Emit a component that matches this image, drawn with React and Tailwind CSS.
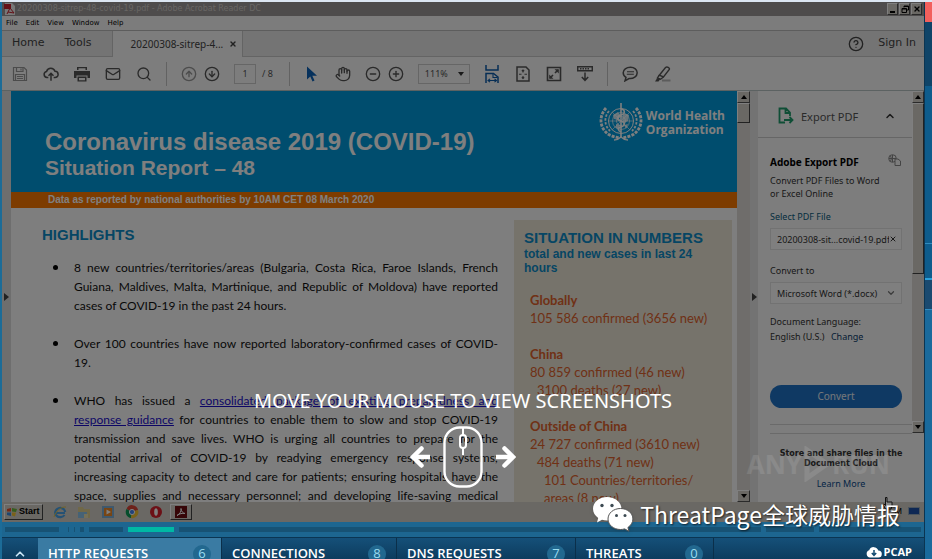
import React from "react";
import {
  Mail, Search, CircleArrowUp, CircleArrowDown, Hand, CircleMinus, CirclePlus,
  CircleHelp, ChevronUp, ChevronDown, X,
} from "lucide-react";

const SaveIcon = () => (
  <svg viewBox="0 0 16 16" className="size-4 text-[#999]" fill="none" stroke="currentColor" strokeWidth="1.2">
    <path d="M1.5 1.5h10.500l2.500 2.500v10.500h-13z" />
    <path d="M4.500 1.500v4h6.500v-4M3.500 14.500v-6h9v6M5 10.500h6M5 12.500h6M9 2.500v2" />
  </svg>
);

const CloudUp = () => (
  <svg viewBox="0 0 18 16" className="size-4" fill="none" stroke="currentColor" strokeWidth="1.7">
    <path d="M6 12H4.500a3.500 3.500 0 0 1-.5-6.900A5 5 0 0 1 13.500 5a3.500 3.500 0 0 1 0 7H12" />
    <path d="M9 15.500V7.500M6.200 10L9 7.200 11.800 10" />
  </svg>
);

const PrintIcon = () => (
  <svg viewBox="0 0 16 16" className="size-4" fill="currentColor">
    <path d="M3 1h10v3H3zM4.500 2.300v1.700h7V2.300z" fillRule="evenodd" />
    <path d="M0 5h16v7h-2.500V9.500h-11V12H0z" />
    <path d="M3.500 10.500h9V15.500h-9zM5 12v2.200h6V12z" fillRule="evenodd" />
  </svg>
);

const CursorIcon = () => (
  <svg viewBox="0 0 12 16" className="h-4 w-3 text-[#0d62b8]" fill="currentColor">
    <path d="M1 0.500v13l3.300-3 2.200 5 2-.9-2.200-4.900h4.700z" />
  </svg>
);

const FitWidth = () => (
  <svg viewBox="0 0 16 18" className="h-[18px] w-4 text-[#0d5cab]" fill="none" stroke="currentColor" strokeWidth="1.500">
    <path d="M2 0v5h12V0M2 18V8.500h7.500L14 12v6" />
    <path d="M9 8.500v4h4.500M4 15.500h8M6 13.800l-2 1.700 2 1.700M10.500 13.800l2 1.700-2 1.700" strokeWidth="1.100" />
  </svg>
);

const FitPage = () => (
  <svg viewBox="0 0 16 16" className="size-4" fill="none" stroke="currentColor" strokeWidth="1.500">
    <path d="M2 1h9l3 3v11H2z" />
    <path d="M8 4v2.500M8 10v2.500M4 8.200h2.500M9.500 8.200H12M6.800 5.200L8 4l1.200 1.200M6.800 11.300L8 12.500l1.200-1.200" strokeWidth="1.100" />
  </svg>
);

const FullScreen = () => (
  <svg viewBox="0 0 16 16" className="size-4" fill="none" stroke="currentColor" strokeWidth="1.600">
    <path d="M1.500 1.500h13v13h-13z" />
    <path d="M9 7l3-3M4 12l3-3" />
    <path d="M8.500 3.200h4.300v4.300zM3.200 8.500v4.300h4.300z" fill="currentColor" stroke="none" />
  </svg>
);

const ReadMode = () => (
  <svg viewBox="0 0 16 17" className="h-[17px] w-4" fill="none" stroke="currentColor" strokeWidth="1.500">
    <path d="M.7 1.700h14.600v4H.7z" />
    <path d="M3 3.700h10" strokeDasharray="1.500 1" />
    <path d="M8 7.500v7.500M4.800 12L8 15.300 11.200 12" />
  </svg>
);

const CommentIcon = () => (
  <svg viewBox="0 0 16 16" className="size-4" fill="none" stroke="currentColor" strokeWidth="1.500">
    <path d="M8.500 1.200c-4.200 0-7.300 2.500-7.300 5.600 0 1.900 1 3.500 2.800 4.600L3 14.800l4-2.300c4.500.5 8.200-2.200 8.200-5.700 0-3.100-2.800-5.600-6.700-5.600z" />
    <path d="M5 5.800h7M4.800 8.300h7" strokeWidth="1.100" />
  </svg>
);

const HighlightIcon = () => (
  <svg viewBox="0 0 17 16" className="h-4 w-[17px]" fill="none" stroke="currentColor" strokeWidth="1.400">
    <path d="M8 14.500h8.500" stroke="#b8b8b8" strokeWidth="2" />
    <path d="M11.500 1.500c1.500-1.200 4.500 0 3.800 2L9.500 11l-4.200-1.800z" />
    <path d="M5.300 9.200L3.500 12l3 1.200 3-2.200" />
    <path d="M3.200 12l3 1.300L4.500 15.500H1z" fill="currentColor" stroke="none" />
  </svg>
);

const ExportIcon = () => (
  <svg viewBox="0 0 16 18" className="h-[18px] w-4 text-[#1f9d6c]" fill="none" stroke="currentColor" strokeWidth="1.800">
    <path d="M7 15.500H1.500v-14h6.500l4 4V9M7.500 1.500V6H12M6 13h8M11.500 10l3 3-3 3" />
  </svg>
);

const GlobeCopy = () => (
  <svg viewBox="0 0 14 12" className="h-3 w-3.5 text-[#888]" fill="none" stroke="currentColor">
    <circle cx="4.500" cy="4.500" r="3.800" />
    <path d="M4.500 1v7M1 4.500h7M2.500 2c1 2 1 3.500 0 5" />
    <path d="M7 5h3l2.500 2v4.500H7z" fill="#fafafa" />
  </svg>
);

const WhoEmblem = () => (
  <svg viewBox="0 0 44 38" className="h-[38px] w-11" fill="none" stroke="#fff">
    <circle cx="22" cy="18" r="12.500" strokeWidth="1" />
    <circle cx="22" cy="18" r="8.500" strokeWidth=".7" />
    <circle cx="22" cy="18" r="4.500" strokeWidth=".7" />
    <path d="M9.500 18h25M13 9l18 18M31 9L13 27" strokeWidth=".6" />
    <path d="M14 12l5-3 3 4-3 4-4-1zM24 10l6 2-1 6-4 2-2-4zM17 21l4 1-1 5-3-2zM25 22l4-1-2 5z" fill="#fff" stroke="none" opacity=".8" />
    <path d="M22 0v34" strokeWidth="1.600" />
    <path d="M22 6c5 1 4 5 0 6s-5 5 0 6 4 5 0 6-3 4 0 5" strokeWidth="1.500" />
    <path d="M7 5C0 13 0 24 9 31c3 2 7 3 11 4M37 5c7 8 7 19-2 26-3 2-7 3-11 4" strokeWidth="2.800" strokeDasharray="3 1.200" />
    <path d="M10 8C5 14 5 22 11 28M34 8c5 6 5 14-1 20" strokeWidth="1.800" strokeDasharray="2.500 1.500" />
    <path d="M15 37c3 0 5-1 7-3 2 2 4 3 7 3" strokeWidth="1.300" />
  </svg>
);

const WeChat = () => (
  <svg viewBox="0 0 42 36" className="h-9 w-[42px] drop-shadow">
    <path d="M15 1C7 1 1 6.200 1 12.800c0 3.700 2 7 5.200 9.200L5 26.500l5-2.700c1.600.5 3.300.7 5 .7 8 0 14.500-5.200 14.500-11.700S23 1 15 1z" fill="#fff" />
    <path d="M28.500 12.500c-7 0-12.500 4.600-12.500 10.500S21.500 33.500 28.500 33.500c1.400 0 2.800-.2 4.100-.6l4.400 2.300-1.100-3.700c3-2 5-5.100 5-8.500 0-5.900-5.500-10.500-12.400-10.500z" fill="#fff" stroke="#555" strokeWidth="1" />
    <g fill="#3d4a52">
      <circle cx="10" cy="9.500" r="1.700" /><circle cx="20" cy="9.500" r="1.700" />
      <circle cx="24.500" cy="19.500" r="1.500" /><circle cx="33" cy="19.500" r="1.500" />
    </g>
  </svg>
);

const Arrow = ({ left }) => (
  <svg viewBox="0 0 20 22" className={left ? "h-[22px] w-5 rotate-180" : "h-[22px] w-5"} fill="none" stroke="#fff" strokeWidth="4.500">
    <path d="M0 11h16" />
    <path d="M8.500 2.500L17 11l-8.500 8.500" strokeLinecap="round" />
  </svg>
);

const MouseIcon = () => (
  <svg viewBox="0 0 40 62" className="h-[62px] w-10" fill="none" stroke="#fff" strokeWidth="2.400">
    <rect x="1.500" y="1.500" width="37" height="59" rx="15" />
    <rect x="17" y="9" width="6" height="13" rx="3" strokeWidth="2" />
    <path d="M20 1v8M20 22v7" strokeWidth="2" />
  </svg>
);

const TaskIcons = () => (
  <>
    <svg viewBox="0 0 14 14" className="size-3.5" fill="none" stroke="#4aa3e8" strokeWidth="2.200">
      <path d="M12 8H3.500M11.500 10a5 4.600 0 1 1 .7-3" /><path d="M1 12C3 6 8 1.500 13 2" stroke="#e8c64a" strokeWidth="1" />
    </svg>
    <svg viewBox="0 0 14 14" className="size-3.5">
      <path d="M1 2h5l1 2h6v9H1z" fill="#e0d090" /><path d="M1 7h9v6H1z" fill="#8cc4ea" /><path d="M7 9h4v4H7z" fill="#e8e0b0" />
    </svg>
    <svg viewBox="0 0 14 14" className="size-3.5">
      <path d="M1 1h12v12H1z" fill="#7fb0d8" /><path d="M3 3h8v8H3z" fill="#f08a28" /><path d="M5.500 4.500v5L10 7z" fill="#fff" />
    </svg>
    <svg viewBox="0 0 14 14" className="size-3.5">
      <path d="M7 7L1.500 4A6 6 0 0 1 13 5z" fill="#db4437" /><path d="M7 7l-5.500-3A6 6 0 0 0 6 13z" fill="#0f9d58" />
      <path d="M7 7l6-2a6 6 0 0 1-7 8z" fill="#f4c430" /><circle cx="7" cy="7" r="2.600" fill="#4285f4" stroke="#fff" />
    </svg>
    <svg viewBox="0 0 14 14" className="size-3.5">
      <circle cx="7" cy="7" r="6" fill="#d8202c" /><ellipse cx="7" cy="7" rx="1.800" ry="3.800" fill="#fff" />
    </svg>
  </>
);

const Divider = ({ className }) => <span className={"h-6 w-px bg-[#c4c4c4] " + className} />;

const ScrollButton = ({ down }) => (
  <button aria-label={down ? "Scroll down" : "Scroll up"} className="flex h-3 w-full shrink-0 items-center justify-center border border-t-white border-r-[#555] border-b-[#555] border-l-white bg-[#d4d0c8]">
    <svg viewBox="0 0 6 4" className={down ? "h-1 w-1.5 rotate-180" : "h-1 w-1.5"}><path d="M3 0l3 4H0z" /></svg>
  </button>
);

const Triangle = () => (
  <svg viewBox="0 0 5 8" className="h-2 w-[5px]"><path d="M0 0l5 4-5 4z" fill="#444" /></svg>
);

function TitleAndMenu() {
  return (
    <header className="shrink-0">
      <div className="flex h-3.5 items-center bg-[#9c9898] px-0.5 text-[#d0ccc8]">
        <svg viewBox="0 0 11 12" className="mr-0.5 h-3 w-[11px]">
          <path d="M1 0h7l3 3v9H1z" fill="#eee" /><path d="M0 1h7v5H0z" fill="#c8202c" /><path d="M3 11l3-6 4 5-6-1" stroke="#c8202c" fill="none" />
        </svg>
        <span className="flex-1 font-['DejaVu_Sans','Noto_Sans',sans-serif] text-[8px] leading-3.5">20200308-sitrep-48-covid-19.pdf - Adobe Acrobat Reader DC</span>
        <div className="flex h-3 gap-px text-black">
          <button aria-label="Minimize" className="flex w-[11px] items-end justify-center border border-t-white border-r-[#555] border-b-[#555] border-l-white bg-[#d4d0c8] pb-px"><span className="h-0.5 w-[5px] bg-black" /></button>
          <button aria-label="Restore" className="flex w-[11px] items-center justify-center border border-t-white border-r-[#555] border-b-[#555] border-l-white bg-[#d4d0c8]">
            <svg viewBox="0 0 8 8" className="size-2" fill="none" stroke="#000"><path d="M3 2.500V1h4.500v4H6M1 3.500h4.500v4H1zM1 4h4.500M3 1.500h4.500" /></svg>
          </button>
          <button aria-label="Close" className="flex w-[11px] items-center justify-center border border-t-white border-r-[#555] border-b-[#555] border-l-white bg-[#d4d0c8]"><X className="size-2" strokeWidth={4} /></button>
        </div>
      </div>
      <nav className="flex h-[15px] items-center gap-2 border-b border-[#bbb] bg-[#f8f8f8] pl-1 font-['DejaVu_Sans','Noto_Sans',sans-serif] text-[7px] text-black">
        <button>File</button><button>Edit</button><button>View</button><button>Window</button><button>Help</button>
      </nav>
      <div className="flex h-[26px] items-stretch bg-[#e8e8e8] text-[#444]">
        <div className="flex items-center gap-5 border-r border-b border-[#c8c8c8] pr-5 pl-2.5 font-['DejaVu_Sans','Noto_Sans',sans-serif] text-[11px]">
          <button>Home</button><button>Tools</button>
        </div>
        <div className="flex w-[130px] items-center justify-between border-r border-[#c8c8c8] bg-[#fafafa] pr-[5px] pl-[18px] font-['Noto_Sans',sans-serif] text-[10px]">
          <span className="whitespace-nowrap">20200308-sitrep-4...</span>
          <button aria-label="Close tab"><X className="size-2" strokeWidth={4} /></button>
        </div>
        <div className="flex flex-1 items-center justify-end gap-3.5 border-b border-[#c8c8c8] pr-2 font-['DejaVu_Sans','Noto_Sans',sans-serif] text-[11px]">
          <button aria-label="Help"><CircleHelp className="size-4" /></button>
          <button>Sign In</button>
        </div>
      </div>
    </header>
  );
}

function Toolbar() {
  return (
    <div className="flex h-[34px] shrink-0 items-center border-b border-[#b8c4c4] bg-[#fafafa] pl-2.5 text-[#555]">
      <div className="flex items-center gap-[15px]">
        <button aria-label="Save"><SaveIcon /></button>
        <button aria-label="Upload"><CloudUp /></button>
        <button aria-label="Print"><PrintIcon /></button>
        <button aria-label="Mail"><Mail className="size-4" /></button>
        <button aria-label="Search"><Search className="size-4" /></button>
      </div>
      <Divider className="mx-3.5" />
      <div className="flex items-center gap-[7px]">
        <button aria-label="Previous page" className="text-[#999]"><CircleArrowUp className="size-4" /></button>
        <button aria-label="Next page"><CircleArrowDown className="size-4" /></button>
      </div>
      <input aria-label="Page" readOnly value="1" className="ml-3.5 h-5 w-[22px] border border-[#ccc] text-center font-['Noto_Sans',sans-serif] text-[9px]" />
      <span className="ml-1.5 font-['Noto_Sans',sans-serif] text-[9px]">/ 8</span>
      <Divider className="mx-4" />
      <button aria-label="Select"><CursorIcon /></button>
      <button aria-label="Pan" className="ml-[17px]"><Hand className="size-4" /></button>
      <button aria-label="Zoom out" className="ml-3.5"><CircleMinus className="size-4" /></button>
      <button aria-label="Zoom in" className="ml-[7px]"><CirclePlus className="size-4" /></button>
      <div className="relative ml-3.5 flex">
        <select aria-label="Zoom level" className="h-5 w-[52px] appearance-none border border-[#ccc] pl-1.5 font-['Noto_Sans',sans-serif] text-[9px]"><option>111%</option></select>
        <svg viewBox="0 0 6 4" className="pointer-events-none absolute top-2 right-1.5 h-1 w-1.5"><path d="M0 0h6L3 4z" fill="#333" /></svg>
      </div>
      <div className="ml-3.5 flex items-center gap-[15px]">
        <button aria-label="Fit width"><FitWidth /></button>
        <button aria-label="Fit page"><FitPage /></button>
        <button aria-label="Full screen"><FullScreen /></button>
        <button aria-label="Read mode"><ReadMode /></button>
      </div>
      <Divider className="mx-3.5" />
      <button aria-label="Comment"><CommentIcon /></button>
      <button aria-label="Highlight" className="ml-4"><HighlightIcon /></button>
    </div>
  );
}

const Line = ({ children, last }) => (
  <span className={last ? "block whitespace-nowrap" : "block whitespace-nowrap [text-align-last:justify]"}>{children}</span>
);

const Item = ({ children }) => (
  <li className="relative">
    <span className="absolute top-[7px] -left-[21px] size-[5px] rounded-full bg-black" />
    {children}
  </li>
);

function Report() {
  return (
    <article className="min-w-0 flex-1 overflow-hidden bg-[#fdfdfd]">
      <div className="flex h-[101px] justify-between bg-[#009bdc] pr-3 pl-[34px] font-['Liberation_Sans',Arial,sans-serif] font-bold text-white">
        <div className="pt-[37px]">
          <h1 className="text-2xl leading-7 whitespace-nowrap">Coronavirus disease 2019 (COVID-19)</h1>
          <h2 className="text-[21px] leading-6">Situation Report – 48</h2>
        </div>
        <div className="flex items-start gap-[3px] pt-3">
          <WhoEmblem />
          <p className="pt-1.5 font-['Open_Sans',sans-serif] text-xs leading-3.5 font-bold">World Health<br />Organization</p>
        </div>
      </div>
      <p className="h-4 bg-[#fa7800] pl-[37px] font-['Liberation_Sans',Arial,sans-serif] text-[10px] leading-4 font-bold text-white">Data as reported by national authorities by 10AM CET 08 March 2020</p>
      <div className="flex pr-[5px]">
        <div className="min-w-0 flex-1 pt-[18px] pl-[31px]">
          <h3 className="h-[18px] font-['Liberation_Sans',Arial,sans-serif] text-[15px] leading-[18px] font-bold text-[#0c8cc8]">HIGHLIGHTS</h3>
          <ul className="mt-3.5 flex flex-col gap-[19px] pr-4 pl-8 font-['Lato',sans-serif] text-xs leading-[19px] text-[#111]">
            <Item>
              <Line>8 new countries/territories/areas (Bulgaria, Costa Rica, Faroe Islands, French</Line>
              <Line>Guiana, Maldives, Malta, Martinique, and Republic of Moldova) have reported</Line>
              <Line last>cases of COVID-19 in the past 24 hours.</Line>
            </Item>
            <Item>
              <Line>Over 100 countries have now reported laboratory-confirmed cases of COVID-</Line>
              <Line last>19.</Line>
            </Item>
            <Item>
              <Line>WHO has issued a <a href="#guidance" className="text-[#1a0dcc] underline">consolidated package of existing preparedness and</a></Line>
              <Line><a href="#guidance" className="text-[#1a0dcc] underline">response guidance</a> for countries to enable them to slow and stop COVID-19</Line>
              <Line>transmission and save lives. WHO is urging all countries to prepare for the</Line>
              <Line>potential arrival of COVID-19 by readying emergency response systems;</Line>
              <Line>increasing capacity to detect and care for patients; ensuring hospitals have the</Line>
              <Line>space, supplies and necessary personnel; and developing life-saving medical</Line>
            </Item>
          </ul>
        </div>
        <aside className="mt-3 w-[218px] shrink-0 bg-[#ece6d6] pt-[9px] pb-10 pl-2.5">
          <h3 className="font-['Liberation_Sans',Arial,sans-serif] text-[15px] leading-[18px] font-bold whitespace-nowrap text-[#0c8cc8]">SITUATION IN NUMBERS</h3>
          <p className="font-['Liberation_Sans',Arial,sans-serif] text-xs leading-3.5 font-bold text-[#0c8cc8]">total and new cases in last 24<br />hours</p>
          <div className="mt-4 flex flex-col gap-[18px] pl-1.5 font-['Lato',sans-serif] text-[13px] leading-[18px] whitespace-nowrap text-[#e0622c]">
            <div><b>Globally</b><p>105 586 confirmed (3656 new)</p></div>
            <div><b>China</b><p>80 859 confirmed (46 new)</p><p className="pl-[7px]">3100 deaths (27 new)</p></div>
            <div><b>Outside of China</b><p>24 727 confirmed (3610 new)</p><p className="pl-[7px]">484 deaths (71 new)</p><p className="pl-3.5">101 Countries/territories/</p><p className="pl-3.5">areas (8 new)</p></div>
          </div>
        </aside>
      </div>
    </article>
  );
}

function ExportPanel() {
  return (
    <aside className="flex w-[154px] shrink-0 flex-col overflow-hidden bg-[#fafafa] font-['Noto_Sans',sans-serif] text-[9px] leading-[13px] text-[#333]">
      <div className="flex h-[47px] shrink-0 items-center border-b border-[#ccc] pt-1 pr-4 pl-5">
        <ExportIcon />
        <h2 className="ml-[7px] flex-1 text-[11px] whitespace-nowrap text-[#555]">Export PDF</h2>
        <ChevronUp className="size-3" strokeWidth={3} />
      </div>
      <div className="flex flex-col pt-4 pr-2.5 pl-3">
        <div className="flex justify-between">
          <h3 className="pt-0.5 text-[10px] font-bold whitespace-nowrap text-black">Adobe Export PDF</h3>
          <GlobeCopy />
        </div>
        <p className="mt-[5px]">Convert PDF Files to Word<br />or Excel Online</p>
        <label htmlFor="pdf-file" className="mt-2.5 text-[#0b5c80]">Select PDF File</label>
        <div className="mt-[5px] flex h-[22px] items-center border border-[#e4e4e4] bg-white pr-1 pl-1.5">
          <input id="pdf-file" readOnly value="20200308-sit...covid-19.pdf" className="min-w-0 flex-1" />
          <button aria-label="Clear"><X className="size-2" strokeWidth={3} /></button>
        </div>
        <label htmlFor="convert-to" className="mt-3.5">Convert to</label>
        <div className="relative mt-[5px] flex">
          <select id="convert-to" className="h-[22px] w-full appearance-none border border-[#e4e4e4] bg-white pl-1.5"><option>Microsoft Word (*.docx)</option></select>
          <ChevronDown className="pointer-events-none absolute top-1.5 right-1.5 size-2.5 text-[#777]" strokeWidth={3} />
        </div>
        <p className="mt-2.5 leading-[15px]">Document Language:<br />English (U.S.) <a href="#language" className="ml-1 text-[#0b3c6c]">Change</a></p>
        <button className="mt-[41px] h-[23px] rounded-full bg-[#1f72c6] text-[10px] text-[#e8eef4]">Convert</button>
      </div>
      <div className="mt-4 ml-3 shrink-0 border-y border-[#d4d4d4] pt-2" />
      <div className="flex flex-col items-center pt-[15px] pl-3 text-center">
        <p className="font-['DejaVu_Sans',sans-serif] text-[8px] leading-2.5 font-bold whitespace-nowrap">Store and share files in the<br />Document Cloud</p>
        <a href="#more" className="mt-2 text-[#0b4c8c]">Learn More</a>
      </div>
    </aside>
  );
}

function Taskbar() {
  return (
    <div className="flex h-5 shrink-0 items-center bg-[#d4d0c8] pl-0.5">
      <button className="flex h-4 items-center gap-0.5 border border-t-white border-r-[#444] border-b-[#444] border-l-white px-0.5 font-['Liberation_Sans',Arial,sans-serif] text-[9px] font-bold">
        <svg viewBox="0 0 10 10" className="size-2.5"><path d="M0 2l4-1v3.500H0z" fill="#e8502c" /><path d="M5 1l5 1-1 3-4-.5z" fill="#6cb83c" /><path d="M0 5.500h4V9L0 8z" fill="#3c8ce0" /><path d="M5 5.500h4l-1 4-3-1z" fill="#f4c430" /></svg>
        Start
      </button>
      <div className="ml-2.5 flex items-center gap-2.5"><TaskIcons /></div>
      <button aria-label="Adobe Acrobat Reader" className="ml-[7px] flex h-4 w-[22px] items-center justify-center border border-t-white border-r-[#444] border-b-[#444] border-l-white">
        <svg viewBox="0 0 12 12" className="size-3"><path d="M0 0h12v12H0z" fill="#6c0c10" /><path d="M2 9.500C5 8 6.500 5 6 2.500c0 3 2 4.500 4 5-3-.5-5 0-8 2z" fill="none" stroke="#fff" /></svg>
      </button>
      <span className="ml-auto font-['Liberation_Sans',Arial,sans-serif] text-[9px]">M</span>
      <svg viewBox="0 0 12 10" className="mr-1 ml-1.5 h-2.5 w-3"><path d="M0 0h12v8H0z" fill="#9ab" /><path d="M1 1h10v6H1z" fill="#1c50a8" /></svg>
    </div>
  );
}

function Hint() {
  return (
    <div className="absolute inset-0 bg-black/50">
      <svg viewBox="0 0 11 14" className="absolute right-[31px] bottom-3 h-3.5 w-[11px]" fill="#888" stroke="#111">
        <path d="M3.500 13L1 8.500l1-.5 1.500 1.500v-8h1.500V6h5v4l-1 3z" />
      </svg>
      <div className="absolute inset-x-0 top-[386px] flex flex-col items-center">
        <p className="font-['Noto_Sans',sans-serif] text-xl leading-[26px] whitespace-nowrap text-white">MOVE YOUR MOUSE TO VIEW SCREENSHOTS</p>
        <div className="mt-3 flex items-center gap-[13px]"><Arrow left /><MouseIcon /><Arrow /></div>
      </div>
      <div className="absolute right-[34px] bottom-10 flex items-center gap-0.5 font-['Open_Sans',sans-serif] text-[26px] leading-9 font-bold text-white/10">
        <span>ANY</span>
        <svg viewBox="0 0 26 36" className="h-9 w-[26px]" fill="none" stroke="currentColor" strokeWidth="5"><path d="M3 4l20 14L3 32z" /></svg>
        <span>RUN</span>
      </div>
    </div>
  );
}

const Tab = ({ label, count, className }) => (
  <button className={"flex h-8 shrink-0 items-center justify-between border-r border-[#0b2f4a] pr-2.5 pl-2.5 " + className}>
    <span className="whitespace-nowrap">{label}</span>
    <span className="flex size-[18px] items-center justify-center rounded-full bg-[#22688f] font-normal text-[#9adcf0]">{count}</span>
  </button>
);

export default function App() {
  return (
    <div className="relative flex h-screen flex-col overflow-hidden border-t-2 border-[#dce6f2] bg-[#1d6690]">
      <div className="flex min-h-0 flex-1">
        <div className="flex min-w-0 flex-1 flex-col border-l-2 border-[#1c6c98]">
          <div className="relative flex min-h-0 flex-1 flex-col">
            <TitleAndMenu />
            <Toolbar />
            <div className="flex min-h-0 flex-1">
              <div className="flex w-[9px] shrink-0 items-center justify-center bg-[#dcdcdc]"><Triangle /></div>
              <Report />
              <div className="flex w-[13px] shrink-0 flex-col bg-[#dedbd6]">
                <ScrollButton />
                <div className="h-5 border border-t-white border-r-[#444] border-b-[#444] border-l-white bg-[#d4d0c8]" />
                <div className="flex-1" />
                <ScrollButton down />
              </div>
              <div className="flex w-2 shrink-0 items-center justify-center bg-[#e6e6e6]"><Triangle /></div>
              <ExportPanel />
              <div className="w-3 shrink-0 bg-[#fafafa]">
                <div className="flex h-[342px] flex-col bg-[#dedbd6]">
                  <ScrollButton />
                  <div className="h-[171px] border border-t-white border-r-[#444] border-b-[#444] border-l-white bg-[#d4d0c8]" />
                  <div className="flex-1" />
                  <ScrollButton down />
                </div>
              </div>
            </div>
            <Taskbar />
            <Hint />
          </div>
          <div className="flex h-[15px] shrink-0 items-center gap-[5px] px-[3px]">
            <span className="h-[5px] w-[54px] bg-[#175274]" />
            <span className="ml-1 h-[5px] w-px bg-[#175274]" />
            <span className="h-[5px] w-px bg-[#175274]" />
            <span className="h-[5px] w-1 bg-[#175274]" />
            <span className="h-[5px] w-[34px] bg-[#175274]" />
            <span className="h-[5px] w-[46px] bg-[#00b8a4]" />
            <span className="h-[5px] flex-1 bg-[#175274]" />
            <span className="h-[5px] w-12 bg-[#175274]" />
            <span className="h-[5px] w-[102px] bg-[#175274]" />
          </div>
          <nav className="flex h-[22px] shrink-0 items-start overflow-hidden border-t border-[#0b3552] bg-linear-to-b from-[#155079] to-[#0d3c5e] font-['Open_Sans','Noto_Sans',sans-serif] text-[13px] font-semibold text-white">
            <button aria-label="Expand" className="flex h-8 w-9 shrink-0 items-center justify-center"><ChevronUp className="size-3.5 text-[#c8e4f4]" strokeWidth={3} /></button>
            <Tab label="HTTP REQUESTS" count="6" className="w-[184px] bg-[#3a7ba3]" />
            <Tab label="CONNECTIONS" count="8" className="w-[175px]" />
            <Tab label="DNS REQUESTS" count="7" className="w-[179px]" />
            <Tab label="THREATS" count="0" className="w-[138px]" />
            <button className="ml-auto flex h-7 items-center gap-0.5 pr-3 text-[11px] font-bold">
              <svg viewBox="0 0 16 12" className="h-3 w-4"><path d="M4 11.500a3.700 3.700 0 0 1-.8-7.200A4.800 4.800 0 0 1 12.300 4.500 3.500 3.500 0 0 1 12.300 11.500z" fill="#fff" /><path d="M8 4v5M5.800 7L8 9.300 10.200 7" stroke="#124a70" strokeWidth="1.500" fill="none" /></svg>
              PCAP
            </button>
          </nav>
        </div>
        <div className="flex w-2 shrink-0 flex-col border-l border-[#0b3552] bg-[#1a6a9c]">
          <div className="h-5 bg-[#f2605d]" />
          <div className="h-16 bg-[#0f4468]" />
          <div className="h-[158px] border-b border-[#2f8cc0] bg-[#0e5c8c]" />
          <div className="h-9 border-b-2 border-[#2aa0da] bg-[#0e5c8c]" />
          <div className="h-[30px] border-b border-[#2f8cc0] bg-[#1a4a70]" />
        </div>
      </div>
      <div className="absolute right-8 bottom-[27px] flex items-center gap-1.5">
        <WeChat />
        <span className="font-['Noto_Sans_CJK_SC',sans-serif] text-[23px] leading-9 whitespace-nowrap text-white [text-shadow:1px_1px_2px_rgba(0,0,0,0.7)]">ThreatPage全球威胁情报</span>
      </div>
    </div>
  );
}
